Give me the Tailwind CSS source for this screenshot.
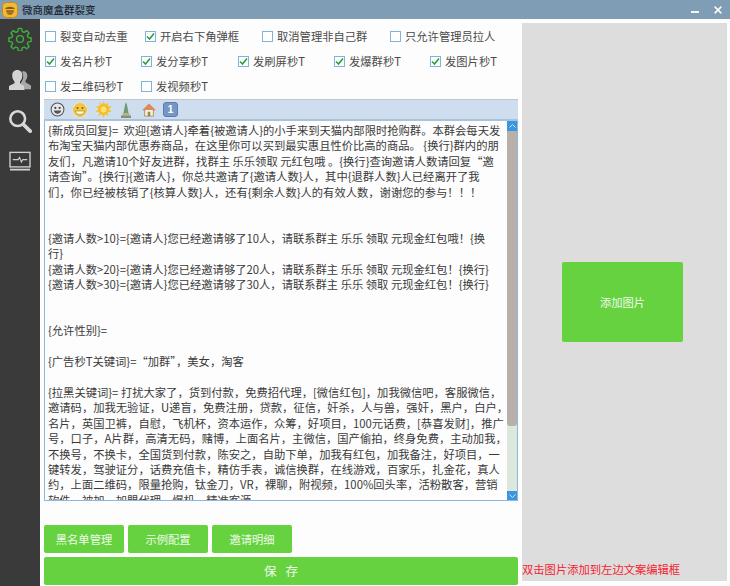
<!DOCTYPE html>
<html lang="zh-CN">
<head>
    <meta charset="UTF-8">
    <title>微商魔盒群裂变</title>
    <script src="https://cdn.jsdelivr.net/npm/@tailwindcss/browser@4"></script>
</head>
<body class="w-[730px] h-[586px] overflow-hidden bg-[#fdfdfd] font-['Noto_Sans_CJK_SC','Noto_Sans',sans-serif] text-[11.3px] text-[#4a4a4a]">
    <!-- Title bar -->
    <header class="h-[19px] bg-[#7f9db5] flex items-center pl-[2px] pr-[8px]">
        <svg class="w-[16px] h-[16px]" viewBox="0 0 16 16">
            <rect x="0.5" y="0.5" width="15" height="15" rx="4" fill="#f0b93a" stroke="#c98a1c"/>
            <path d="M3 7c1-3 9-3 10 0z" fill="#8a5a12"/>
            <path d="M4 8h8c0 3-2 5-4 5s-4-2-4-5z" fill="#a8701a"/>
        </svg>
        <span class="ml-[4px] text-[10.5px] leading-[19px] font-medium text-[#1c2730]">微商魔盒群裂变</span>
        <div class="ml-auto flex items-center gap-[15px]">
            <div class="w-[8px] h-[2px] bg-white/90 mt-[4px]"></div>
            <svg class="w-[8px] h-[8px]" viewBox="0 0 9 9"><path d="M.7.7l7.6 7.6M8.3.7L.7 8.3" stroke="#fff" stroke-width="1.600"/></svg>
        </div>
    </header>

    <div class="flex h-[567px]">
        <!-- Sidebar -->
        <nav class="w-[40px] shrink-0 bg-[#3a3a3a] flex flex-col items-center pt-[8px]">
            <svg class="w-[24px] h-[24px]" viewBox="0 0 24 24" fill="none" stroke="#3fae3c" stroke-width="1.400" stroke-linejoin="round">
                <circle cx="12" cy="12" r="3.400"/>
                <path d="M10.300 1.500h3.400l.5 3 2 .85 2.500-1.750 2.400 2.400-1.750 2.500.85 2 3 .5v3.400l-3 .5-.85 2 1.750 2.500-2.400 2.400-2.500-1.750-2 .85-.5 3h-3.400l-.5-3-2-.85-2.500 1.750-2.400-2.400 1.750-2.500-.85-2-3-.5v-3.400l3-.5.85-2-1.750-2.500 2.400-2.400 2.500 1.750 2-.85z"/>
            </svg>
            <svg class="w-[24px] h-[22px] mt-[18px]" viewBox="0 0 26 24" fill="#d4d4d4">
                <path d="M15 3c3-1.500 6 .5 6 4 0 2.500-1 4.500-2 5.500v2l6 3.500v4H18v-3l-4-3v-1c1.500-1.500 2.500-4 2.500-6.500 0-2-.5-4-1.500-5.500z" fill="#a8a8a8"/>
                <path d="M10 1c3.500 0 5.500 2.500 5.500 6 0 3-1 5-2.500 6.500v2l5 3v4.500H1v-4.500l6-3v-2C5.500 12 4.500 10 4.500 7c0-3.500 2-6 5.500-6z"/>
            </svg>
            <svg class="w-[24px] h-[24px] mt-[18px]" viewBox="0 0 26 26" fill="none" stroke="#d8d8d8">
                <circle cx="10.500" cy="10.500" r="8" stroke-width="2.800"/>
                <path d="M16.500 16.500l7.500 7.500" stroke-width="4" stroke-linecap="round"/>
            </svg>
            <svg class="w-[22px] h-[20px] mt-[18px]" viewBox="0 0 24 22" fill="none" stroke="#d0d0d0">
                <rect x="1" y="1.500" width="22" height="16" stroke-width="1.500"/>
                <path d="M4 9.500h6l1.500-2.500 2 5 1.500-2.500h5" stroke-width="1.200"/>
                <path d="M1 20.500h22" stroke-width="2"/>
            </svg>
        </nav>

        <!-- Main column -->
        <main class="w-[482px] shrink-0 pl-[4px] flex flex-col">
            <div class="h-[80px] pl-[1px] pt-[8px] flex flex-col">
                <div class="flex h-[18px] items-center">
                    <label class="w-[100px] flex items-center"><span class="w-[11px] h-[11px] border border-[#7db4dc] bg-white"></span><span class="ml-[4px]">裂变自动去重</span></label>
                    <label class="w-[117px] flex items-center"><span class="w-[11px] h-[11px] border border-[#7db4dc] bg-white flex items-center justify-center"><svg class="w-[9px] h-[9px]" viewBox="0 0 9 9"><path d="M1 4.500l2.500 2.500L8 1.500" fill="none" stroke="#2f9e3a" stroke-width="1.600"/></svg></span><span class="ml-[4px]">开启右下角弹框</span></label>
                    <label class="w-[128px] flex items-center"><span class="w-[11px] h-[11px] border border-[#7db4dc] bg-white"></span><span class="ml-[4px]">取消管理非自己群</span></label>
                    <label class="flex items-center"><span class="w-[11px] h-[11px] border border-[#7db4dc] bg-white"></span><span class="ml-[4px]">只允许管理员拉人</span></label>
                </div>
                <div class="flex h-[18px] items-center mt-[7px]">
                    <label class="w-[96px] flex items-center"><span class="w-[11px] h-[11px] border border-[#7db4dc] bg-white flex items-center justify-center"><svg class="w-[9px] h-[9px]" viewBox="0 0 9 9"><path d="M1 4.500l2.500 2.500L8 1.500" fill="none" stroke="#2f9e3a" stroke-width="1.600"/></svg></span><span class="ml-[4px]">发名片秒T</span></label>
                    <label class="w-[97px] flex items-center"><span class="w-[11px] h-[11px] border border-[#7db4dc] bg-white flex items-center justify-center"><svg class="w-[9px] h-[9px]" viewBox="0 0 9 9"><path d="M1 4.500l2.500 2.500L8 1.500" fill="none" stroke="#2f9e3a" stroke-width="1.600"/></svg></span><span class="ml-[4px]">发分享秒T</span></label>
                    <label class="w-[96px] flex items-center"><span class="w-[11px] h-[11px] border border-[#7db4dc] bg-white flex items-center justify-center"><svg class="w-[9px] h-[9px]" viewBox="0 0 9 9"><path d="M1 4.500l2.500 2.500L8 1.500" fill="none" stroke="#2f9e3a" stroke-width="1.600"/></svg></span><span class="ml-[4px]">发刷屏秒T</span></label>
                    <label class="w-[96px] flex items-center"><span class="w-[11px] h-[11px] border border-[#7db4dc] bg-white flex items-center justify-center"><svg class="w-[9px] h-[9px]" viewBox="0 0 9 9"><path d="M1 4.500l2.500 2.500L8 1.500" fill="none" stroke="#2f9e3a" stroke-width="1.600"/></svg></span><span class="ml-[4px]">发爆群秒T</span></label>
                    <label class="flex items-center"><span class="w-[11px] h-[11px] border border-[#7db4dc] bg-white flex items-center justify-center"><svg class="w-[9px] h-[9px]" viewBox="0 0 9 9"><path d="M1 4.500l2.500 2.500L8 1.500" fill="none" stroke="#2f9e3a" stroke-width="1.600"/></svg></span><span class="ml-[4px]">发图片秒T</span></label>
                </div>
                <div class="flex h-[18px] items-center mt-[7px]">
                    <label class="w-[96px] flex items-center"><span class="w-[11px] h-[11px] border border-[#7db4dc] bg-white"></span><span class="ml-[4px]">发二维码秒T</span></label>
                    <label class="flex items-center"><span class="w-[11px] h-[11px] border border-[#7db4dc] bg-white"></span><span class="ml-[4px]">发视频秒T</span></label>
                </div>
            </div>

            <!-- Editor -->
            <section class="w-[474px] h-[402px] flex flex-col border-b border-x border-[#8fb6de]">
                <div class="h-[22px] shrink-0 -mx-[1px] bg-[#cfdeee] border-t border-[#bfc6cc] border-b-2 border-b-[#a9c3dc] flex items-center pl-[6px]">
                    <svg class="w-[15px] h-[15px]" viewBox="0 0 14 14"><circle cx="7" cy="7" r="6" fill="#e4e8ec" stroke="#555"/><circle cx="5" cy="5.500" r="1" fill="#444"/><circle cx="9" cy="5.500" r="1" fill="#444"/><path d="M3.500 8h7c-.5 2-2 3-3.500 3S4 10 3.500 8z" fill="#555"/></svg>
                    <svg class="w-[16px] h-[16px] ml-[7px]" viewBox="0 0 16 16"><circle cx="8" cy="8" r="7.500" fill="#fff3c0"/><circle cx="8" cy="8" r="6.500" fill="#f6c93c" stroke="#e0a020" stroke-width=".6"/><circle cx="5.500" cy="6" r="1" fill="#7a5a10"/><circle cx="10.500" cy="6" r="1" fill="#7a5a10"/><path d="M3.500 9h9c-.5 2.500-2.500 3.500-4.500 3.500S4 11.500 3.500 9z" fill="#fff" stroke="#9a7010" stroke-width=".6"/></svg>
                    <svg class="w-[17px] h-[17px] ml-[7px]" viewBox="0 0 16 16"><path d="M8 0l1.500 3 3-1.500-.5 3.300 3.500.2-2.300 2.500L15.500 10l-3.500.5.500 3.500-3-1.500L8 16l-1.500-3.500-3 1.500.5-3.500L.5 10l2.800-2.500L1 5l3.500-.2L4 1.500l3 1.500z" fill="#f7c22e"/><circle cx="8" cy="8" r="3.500" fill="#fbe26a" stroke="#e89c1c" stroke-width=".6"/></svg>
                    <svg class="w-[10px] h-[16px] ml-[9px]" viewBox="0 0 10 16"><path d="M5 0l1 3 1.500 8h-5L4 3z" fill="#6f9a72"/><rect x="1.500" y="11" width="7" height="2.500" fill="#b5b58e"/><rect y="13.500" width="10" height="2.500" fill="#8e8e6c"/></svg>
                    <svg class="w-[14px] h-[14px] ml-[11px]" viewBox="0 0 16 16"><path d="M8 1L1 8h2v7h10V8h2z" fill="#f6efe0" stroke="#c08050"/><path d="M8 1L1 8h14z" fill="#dc8a5c"/><rect x="6.500" y="10" width="3" height="5" fill="#7a9a4a"/></svg>
                    <div class="w-[15px] h-[15px] ml-[7px] rounded-[3px] bg-[#7696c6] border border-[#5a7cae] text-white text-[10px] leading-[13px] text-center font-bold font-['Liberation_Sans']">1</div>
                </div>
                <div class="flex flex-1 min-h-0">
                    <div class="flex-1 overflow-hidden pl-[3px] pt-[2px] text-[11.3px] leading-[15.4px] whitespace-pre text-[#3a3a3a]"><p>{新成员回复}=  欢迎{邀请人}牵着{被邀请人}的小手来到天猫内部限时抢购群。本群会每天发</p><p>布淘宝天猫内部优惠券商品，在这里你可以买到最实惠且性价比高的商品。 {换行}群内的朋</p><p>友们，凡邀请10个好友进群，找群主 乐乐领取 元红包哦 。{换行}查询邀请人数请回复“邀</p><p>请查询”。{换行}{邀请人}，你总共邀请了{邀请人数}人，其中{退群人数}人已经离开了我</p><p>们，你已经被核销了{核算人数}人，还有{剩余人数}人的有效人数，谢谢您的参与！！！</p><p> </p><p> </p><p>{邀请人数&gt;10}={邀请人}您已经邀请够了10人，请联系群主 乐乐 领取 元现金红包哦！{换</p><p>行}</p><p>{邀请人数&gt;20}={邀请人}您已经邀请够了20人，请联系群主 乐乐 领取 元现金红包！{换行}</p><p>{邀请人数&gt;30}={邀请人}您已经邀请够了30人，请联系群主 乐乐 领取 元现金红包！{换行}</p><p> </p><p> </p><p>{允许性别}=</p><p> </p><p>{广告秒T关键词}=“加群”，美女，淘客</p><p> </p><p>{拉黑关键词}= 打扰大家了，货到付款，免费招代理，[微信红包]，加我微信吧，客服微信，</p><p>邀请码，加我无验证，U递盲，免费注册，贷款，征信，奸杀，人与兽，强奸，黑户，白户，</p><p>名片，英国卫裤，自慰，飞机杯，资本运作，众筹，好项目，100元话费，[恭喜发财]，推广</p><p>号，口子，A片群，高清无码，赌博，上面名片，主微信，国产偷拍，终身免费，主动加我，</p><p>不换号，不换卡，全国货到付款，陈安之，自助下单，加我有红包，加我备注，好项目，一</p><p>键转发，驾驶证分，话费充值卡，精仿手表，诚信换群，在线游戏，百家乐，扎金花，真人</p><p>约，上面二维码，限量抢购，钛金刀，VR，裸聊，附视频，100%回头率，活粉散客，营销</p><p>软件，被加，加盟代理，爆机，精准客源</p></div>
                    <!-- Scrollbar -->
                    <div class="w-[10px] shrink-0 flex flex-col bg-[#dde8dd]">
                        <div class="h-[10px] bg-[#3a96dd] flex items-center justify-center"><svg class="w-[7px] h-[4px]" viewBox="0 0 7 4"><path d="M.5 3.500l3-3 3 3" fill="none" stroke="#cfe6f7"/></svg></div>
                        <div class="h-[295px] bg-[#b9b0aa] rounded-b-[3px]"></div>
                        <div class="mt-auto h-[9px] bg-[#3a96dd] flex items-center justify-center"><svg class="w-[7px] h-[4px]" viewBox="0 0 7 4"><path d="M.5.500l3 3 3-3" fill="none" stroke="#cfe6f7"/></svg></div>
                    </div>
                </div>
            </section>

            <div class="flex gap-[4px] mt-[24px]">
                <button class="w-[80px] h-[28px] bg-[#66d23f] rounded-[2px] text-white/90 text-[11.3px]">黑名单管理</button>
                <button class="w-[80px] h-[28px] bg-[#66d23f] rounded-[2px] text-white/90 text-[11.3px]">示例配置</button>
                <button class="w-[80px] h-[28px] bg-[#66d23f] rounded-[2px] text-white/90 text-[11.3px]">邀请明细</button>
            </div>
            <button class="w-[474px] h-[28px] mt-[4px] pl-[9px] bg-[#66d23f] rounded-[2px] text-white/90 text-[12.5px] tracking-[9px]">保存</button>
        </main>

        <!-- Right panel -->
        <aside class="w-[205px] h-[558px] mt-[4px] bg-[#dddddd] flex flex-col">
            <div class="flex-1 flex items-start justify-center">
                <button class="w-[121px] h-[80px] mt-[239px] -ml-[4px] bg-[#66d23f] rounded-[2px] text-white/90 text-[11.3px]">添加图片</button>
            </div>
            <p class="text-[#f5222d] text-[11.3px] leading-[16px] mb-[4px] whitespace-nowrap">双击图片添加到左边文案编辑框</p>
        </aside>
    </div>
</body>
</html>
